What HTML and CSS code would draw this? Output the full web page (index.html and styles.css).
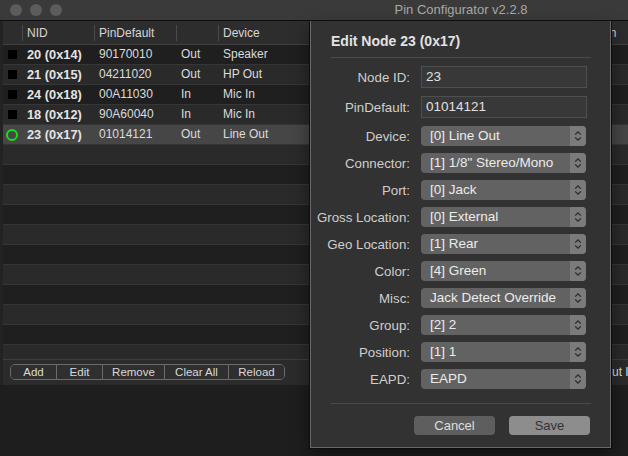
FILE: index.html
```html
<!DOCTYPE html>
<html>
<head>
<meta charset="utf-8">
<title>Pin Configurator</title>
<link rel="stylesheet" href="styles.css">
</head>
<body>
<div class="window">
  <div class="titlebar">
    <div class="lights"><span class="light"></span><span class="light"></span><span class="light"></span></div>
    <div class="title">Pin Configurator v2.2.8</div>
  </div>
  <div class="main">
    <div class="table">
      <div class="thead grid">
        <div class="th first"></div>
        <div class="th">NID</div>
        <div class="th">PinDefault</div>
        <div class="th"></div>
        <div class="th">Device</div>
        <div class="th"></div>
        <div class="th">Location</div>
      </div>
      <div class="tbody">
        <div class="tr grid odd"><div class="td ind"><span class="sq"></span></div><div class="td nid">20 (0x14)</div><div class="td">90170010</div><div class="td">Out</div><div class="td">Speaker</div><div class="td"></div><div class="td"></div></div>
        <div class="tr grid even"><div class="td ind"><span class="sq"></span></div><div class="td nid">21 (0x15)</div><div class="td">04211020</div><div class="td">Out</div><div class="td">HP Out</div><div class="td"></div><div class="td"></div></div>
        <div class="tr grid odd"><div class="td ind"><span class="sq"></span></div><div class="td nid">24 (0x18)</div><div class="td">00A11030</div><div class="td">In</div><div class="td">Mic In</div><div class="td"></div><div class="td"></div></div>
        <div class="tr grid even"><div class="td ind"><span class="sq"></span></div><div class="td nid">18 (0x12)</div><div class="td">90A60040</div><div class="td">In</div><div class="td">Mic In</div><div class="td"></div><div class="td"></div></div>
        <div class="tr grid selected"><div class="td ind"><span class="ring"></span></div><div class="td nid">23 (0x17)</div><div class="td">01014121</div><div class="td">Out</div><div class="td">Line Out</div><div class="td"></div><div class="td"></div></div>
        <div class="tr grid even"></div>
        <div class="tr grid odd"></div>
        <div class="tr grid even"></div>
        <div class="tr grid odd"></div>
        <div class="tr grid even"></div>
        <div class="tr grid odd"></div>
        <div class="tr grid even"></div>
        <div class="tr grid odd"></div>
        <div class="tr grid even"></div>
        <div class="tr grid odd"></div>
        <div class="tr grid even"></div>
      </div>
    </div>
    <div class="toolbar">
      <div class="segmented">
        <button class="seg seg-add">Add</button>
        <button class="seg seg-edit">Edit</button>
        <button class="seg seg-remove">Remove</button>
        <button class="seg seg-clear">Clear All</button>
        <button class="seg seg-reload">Reload</button>
      </div>
      <span class="layout-label">Layout ID</span>
    </div>
  </div>

  <div class="sheet">
    <div class="sheet-head">Edit Node 23 (0x17)</div>
    <div class="form">
      <div class="field text-row"><label class="lbl">Node ID:</label><div class="textfield">23</div></div>
      <div class="field text-row"><label class="lbl">PinDefault:</label><div class="textfield">01014121</div></div>
      <div class="field pop-row"><label class="lbl">Device:</label><div class="popup"><span class="popup-text">[0] Line Out</span><span class="popup-arrow"><svg width="16" height="20" viewBox="0 0 16 20"><path d="M5.2 8.6 8 5.8 10.8 8.6M5.2 11.4 8 14.2 10.8 11.4" fill="none" stroke="#2a2a2a" stroke-width="1.3"/></svg></span></div></div>
      <div class="field pop-row"><label class="lbl">Connector:</label><div class="popup"><span class="popup-text">[1] 1/8" Stereo/Mono</span><span class="popup-arrow"><svg width="16" height="20" viewBox="0 0 16 20"><path d="M5.2 8.6 8 5.8 10.8 8.6M5.2 11.4 8 14.2 10.8 11.4" fill="none" stroke="#2a2a2a" stroke-width="1.3"/></svg></span></div></div>
      <div class="field pop-row"><label class="lbl">Port:</label><div class="popup"><span class="popup-text">[0] Jack</span><span class="popup-arrow"><svg width="16" height="20" viewBox="0 0 16 20"><path d="M5.2 8.6 8 5.8 10.8 8.6M5.2 11.4 8 14.2 10.8 11.4" fill="none" stroke="#2a2a2a" stroke-width="1.3"/></svg></span></div></div>
      <div class="field pop-row"><label class="lbl">Gross Location:</label><div class="popup"><span class="popup-text">[0] External</span><span class="popup-arrow"><svg width="16" height="20" viewBox="0 0 16 20"><path d="M5.2 8.6 8 5.8 10.8 8.6M5.2 11.4 8 14.2 10.8 11.4" fill="none" stroke="#2a2a2a" stroke-width="1.3"/></svg></span></div></div>
      <div class="field pop-row"><label class="lbl">Geo Location:</label><div class="popup"><span class="popup-text">[1] Rear</span><span class="popup-arrow"><svg width="16" height="20" viewBox="0 0 16 20"><path d="M5.2 8.6 8 5.8 10.8 8.6M5.2 11.4 8 14.2 10.8 11.4" fill="none" stroke="#2a2a2a" stroke-width="1.3"/></svg></span></div></div>
      <div class="field pop-row"><label class="lbl">Color:</label><div class="popup"><span class="popup-text">[4] Green</span><span class="popup-arrow"><svg width="16" height="20" viewBox="0 0 16 20"><path d="M5.2 8.6 8 5.8 10.8 8.6M5.2 11.4 8 14.2 10.8 11.4" fill="none" stroke="#2a2a2a" stroke-width="1.3"/></svg></span></div></div>
      <div class="field pop-row"><label class="lbl">Misc:</label><div class="popup"><span class="popup-text">Jack Detect Override</span><span class="popup-arrow"><svg width="16" height="20" viewBox="0 0 16 20"><path d="M5.2 8.6 8 5.8 10.8 8.6M5.2 11.4 8 14.2 10.8 11.4" fill="none" stroke="#2a2a2a" stroke-width="1.3"/></svg></span></div></div>
      <div class="field pop-row"><label class="lbl">Group:</label><div class="popup"><span class="popup-text">[2] 2</span><span class="popup-arrow"><svg width="16" height="20" viewBox="0 0 16 20"><path d="M5.2 8.6 8 5.8 10.8 8.6M5.2 11.4 8 14.2 10.8 11.4" fill="none" stroke="#2a2a2a" stroke-width="1.3"/></svg></span></div></div>
      <div class="field pop-row"><label class="lbl">Position:</label><div class="popup"><span class="popup-text">[1] 1</span><span class="popup-arrow"><svg width="16" height="20" viewBox="0 0 16 20"><path d="M5.2 8.6 8 5.8 10.8 8.6M5.2 11.4 8 14.2 10.8 11.4" fill="none" stroke="#2a2a2a" stroke-width="1.3"/></svg></span></div></div>
      <div class="field pop-row last"><label class="lbl">EAPD:</label><div class="popup"><span class="popup-text">EAPD</span><span class="popup-arrow"><svg width="16" height="20" viewBox="0 0 16 20"><path d="M5.2 8.6 8 5.8 10.8 8.6M5.2 11.4 8 14.2 10.8 11.4" fill="none" stroke="#2a2a2a" stroke-width="1.3"/></svg></span></div></div>
    </div>
    <div class="sheet-foot">
      <button class="btn btn-cancel">Cancel</button>
      <button class="btn btn-save">Save</button>
    </div>
  </div>
</div>
</body>
</html>
```

FILE: styles.css
```css
* { box-sizing: border-box; }

html, body {
  margin: 0;
  padding: 0;
}

body {
  width: 628px;
  height: 456px;
  overflow: hidden;
  background: #1e1e1e;
  font-family: "Liberation Sans", Arial, sans-serif;
  color: #dcdcdc;
}

.window {
  position: relative;
  width: 628px;
  height: 456px;
}

/* Title bar */
.titlebar {
  height: 21px;
  background: #3a3a3a;
  border-bottom: 1px solid #0d0d0d;
  display: flex;
  align-items: center;
}

.lights {
  width: 294px;
  display: flex;
  gap: 8px;
  padding-left: 10px;
  align-items: center;
  height: 20px;
}

.light {
  width: 12px;
  height: 12px;
  border-radius: 50%;
  background: #5c5c5c;
}

.title {
  flex: 1;
  text-align: center;
  font-size: 13px;
  line-height: 20px;
  color: #a9a9a9;
  white-space: nowrap;
}

/* Main area */
.main {
  padding-left: 3px;
  background: #232323;
}

.grid {
  display: grid;
  grid-template-columns: 19px 72px 82px 42px 180px 168px 1fr;
}

.thead {
  height: 24px;
  background: #2d2d2d;
  border-bottom: 1px solid #414141;
  align-items: center;
}

.th {
  height: 16px;
  border-left: 1px solid #4a4a4a;
  padding-left: 4px;
  font-size: 12px;
  line-height: 16px;
  color: #d6d6d6;
  white-space: nowrap;
  overflow: hidden;
}

.th.first {
  border-left: none;
}

.tbody {
  height: 315px;
  overflow: hidden;
  border-bottom: 1px solid #3e3e3e;
}

.tr {
  height: 20px;
  border-bottom: 1px solid #363636;
  align-items: center;
}

.tr.odd { background: #1f1f1f; }
.tr.even { background: #2a2a2a; }
.tr.selected { background: #464646; }

.td {
  padding-left: 5px;
  font-size: 12px;
  line-height: 19px;
  color: #dcdcdc;
  white-space: nowrap;
  overflow: hidden;
}

.td.nid {
  font-weight: bold;
  font-size: 12.8px;
  color: #e4e4e4;
}

.td.ind {
  padding: 0 1px 0 0;
  display: flex;
  justify-content: center;
  align-items: center;
  height: 19px;
}

.sq {
  width: 9px;
  height: 9px;
  background: #000;
}

.ring {
  width: 12px;
  height: 12px;
  border-radius: 50%;
  border: 2px solid #16e016;
}

/* Toolbar */
.toolbar {
  height: 25px;
  background: #2b2b2b;
  padding-top: 4px;
  padding-left: 7px;
  display: flex;
  align-items: flex-start;
  overflow: hidden;
}

.segmented {
  flex-shrink: 0;
  display: flex;
  height: 16px;
  border: 1px solid #6c6c6c;
  border-radius: 5px;
  overflow: hidden;
}

.seg {
  flex-shrink: 0;
  margin: 0;
  padding: 0;
  height: 14px;
  border: none;
  border-left: 1px solid #6c6c6c;
  background: #2f2f2f;
  color: #dadada;
  font-family: "Liberation Sans", Arial, sans-serif;
  font-size: 11.5px;
  line-height: 14px;
  text-align: center;
}

.seg-add { width: 45px; border-left: none; }
.seg-edit { width: 46px; }
.seg-remove { width: 62px; }
.seg-clear { width: 64px; }
.seg-reload { width: 56px; }

.layout-label {
  flex-shrink: 0;
  margin-left: 301px;
  font-size: 12px;
  line-height: 16px;
  color: #dcdcdc;
  white-space: nowrap;
}

/* Sheet dialog */
.sheet {
  position: absolute;
  left: 310px;
  top: 21px;
  width: 301px;
  height: 427px;
  background: #323232;
  border: 1px solid #686868;
  border-top: none;
  box-shadow: 0 0 0 1px #0e0e0e, 0 8px 18px rgba(0, 0, 0, 0.45);
}

.sheet-head {
  height: 37px;
  margin: 0 19px 0 20px;
  padding-top: 12px;
  border-bottom: 1px solid #4a4a4a;
  font-size: 14px;
  font-weight: bold;
  line-height: 17px;
  color: #e2e2e2;
}

.form {
  padding-top: 8px;
}

.field {
  display: flex;
  align-items: center;
}

.text-row {
  height: 22px;
  margin-bottom: 8px;
}

.pop-row {
  height: 20px;
  margin-bottom: 7px;
}

.pop-row.last {
  margin-bottom: 0;
}

.lbl {
  width: 99px;
  margin-right: 11px;
  text-align: right;
  font-size: 13.3px;
  color: #cfcfcf;
  white-space: nowrap;
}

.textfield {
  width: 166px;
  height: 22px;
  border: 1px solid #4f4f4f;
  background: #383838;
  padding-left: 4px;
  font-size: 13.5px;
  line-height: 20px;
  color: #e0e0e0;
}

.popup {
  width: 165px;
  height: 20px;
  border-radius: 4px;
  background: #626262;
  display: flex;
  overflow: hidden;
}

.popup-text {
  flex: 1;
  padding-left: 9px;
  font-size: 13.5px;
  line-height: 20px;
  color: #ececec;
  white-space: nowrap;
}

.popup-arrow {
  width: 16px;
  height: 20px;
  background: #7b7b7b;
  display: flex;
}

.sheet-foot {
  margin: 14px 19px 0 20px;
  padding-top: 12px;
  border-top: 1px solid #4a4a4a;
  display: flex;
  justify-content: flex-end;
  gap: 14px;
  padding-right: 1px;
}

.btn {
  width: 81px;
  height: 19px;
  margin: 0;
  padding: 0;
  border: none;
  border-radius: 4px;
  font-family: "Liberation Sans", Arial, sans-serif;
  font-size: 13px;
  line-height: 19px;
  text-align: center;
}

.btn-cancel {
  background: #5e5e5e;
  color: #dedede;
}

.btn-save {
  background: #8d8d8d;
  color: #333333;
}
```
